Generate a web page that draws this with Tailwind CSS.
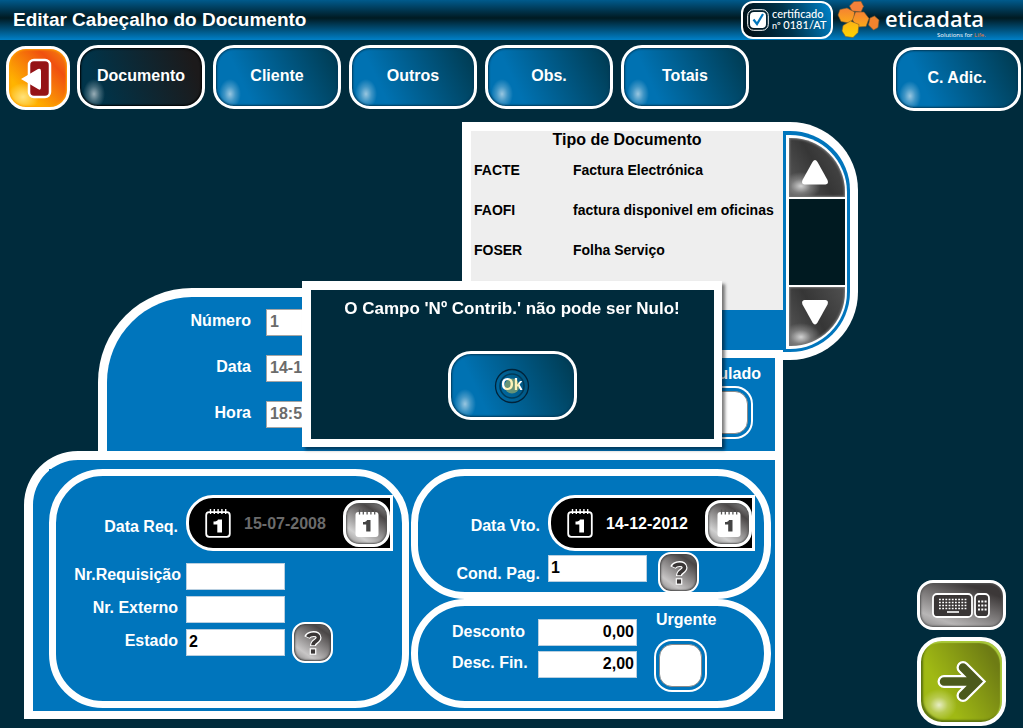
<!DOCTYPE html>
<html lang="pt">
<head>
<meta charset="utf-8">
<meta name="viewport" content="width=device-width, initial-scale=1">
<title>Editar Cabeçalho do Documento</title>
<script src="https://cdn.jsdelivr.net/npm/@tailwindcss/browser@4"></script>
</head>
<body class="min-h-screen flex flex-col bg-[#002b3c] font-['Liberation_Sans',Arial,sans-serif] font-bold text-base leading-5 text-white overflow-x-hidden">

<svg class="hidden" aria-hidden="true">
  <defs>
    <symbol id="calendar-outline" viewBox="0 0 26 30">
      <rect x="1.2" y="4.2" width="23.6" height="24.6" rx="3" fill="none" stroke="#fff" stroke-width="1.8"/>
      <path d="M5.5 1v5M9.3 1v5M13.1 1v5M16.9 1v5M20.7 1v5" stroke="#fff" stroke-width="1.4"/>
      <path d="M8.500 13.500c2.600 0 4-.5 4.500-2h4v13h-4.700v-8H8.500z" fill="#fff"/>
    </symbol>
    <symbol id="calendar-solid" viewBox="0 0 26 30">
      <rect x="1.500" y="4" width="23" height="25" rx="3" fill="#fff"/>
      <path d="M5.500 1.500v5M9.300 1.500v5M13.100 1.500v5M16.900 1.500v5M20.700 1.500v5" stroke="#555" stroke-width="1.300"/>
      <path d="M9 14c2.400 0 3.500-.5 4-2h3.500v11.500h-4.300v-7H9z" fill="#444"/>
    </symbol>
    <symbol id="question" viewBox="0 0 20 26">
      <g fill="none" stroke-linejoin="miter">
        <path d="M4 7.500C6 3 15.500 2.500 15.500 7.500c0 4-5.500 3.500-5.500 8.500" stroke="#fff" stroke-width="6"/>
        <path d="M4.700 7C6.500 3.500 15.500 3 15.500 7.500c0 4-5.500 3.500-5.500 7.700" stroke="#3a3636" stroke-width="3.600"/>
      </g>
      <rect x="7.300" y="18.800" width="5.400" height="5.400" fill="#3a3636" stroke="#fff" stroke-width="1.200"/>
    </symbol>
  </defs>
</svg>

<header class="h-10 flex items-center justify-between pl-[13px] pr-[37px] bg-[linear-gradient(#005a8c,#001a22_45%,#0080c8)]">
  <h1 class="text-[19px] leading-6">Editar Cabeçalho do Documento</h1>
  <div class="flex items-center gap-1">
    <div class="w-[92px] h-[38px] flex items-center gap-[3px] pl-1 rounded-xl border-2 border-white bg-[linear-gradient(70deg,#000a10,#00344c_50%,#0084cc)]">
      <svg class="w-[22px] h-[22px] shrink-0" viewBox="0 0 22 22">
        <rect x=".7" y=".7" width="20.600" height="20.600" rx="6" fill="none" stroke="#fff" stroke-width="1"/>
        <rect x="3" y="3" width="16" height="16" rx="4" fill="#fff"/>
        <path d="M6.500 10.500l3.500 4.500 6-10" fill="none" stroke="#0075bc" stroke-width="2.200"/>
      </svg>
      <div class="font-['Lato',sans-serif] font-medium">
        <div class="text-[11px] leading-[10px]">certificado</div>
        <div class="text-[11px] leading-[12px] whitespace-nowrap"><span class="text-[9px]">nº</span> 0181/AT</div>
      </div>
    </div>
    <svg class="w-[149px] h-10" viewBox="0 0 149 40" role="img" aria-label="eticadata">
      <defs>
        <linearGradient id="amber" x1="0" y1="0" x2="0" y2="1"><stop offset="0" stop-color="#f58233"/><stop offset="1" stop-color="#fba919"/></linearGradient>
        <linearGradient id="gold" x1="0" y1="0" x2="0" y2="1"><stop offset="0" stop-color="#fbb216"/><stop offset="1" stop-color="#ffd400"/></linearGradient>
      </defs>
      <g stroke="#7a5a30" stroke-width=".6" stroke-linejoin="round">
        <path d="M12.500 6L17 1.500l7-.2 2.500 5L24 12l-9-1z" fill="#f5813a"/>
        <path d="M3 9.500L10 8l7.500 4-.5 6.500-5 4.500-8-1.500L1 15z" fill="url(#amber)"/>
        <path d="M18.500 12l8.500 0 5 6.500-3 8-9 .5-4.500-7z" fill="url(#amber)"/>
        <path d="M6 25.500l7.500-4.500 8.500 3.500-1 8-5 5-7.500-1-3.500-5.500z" fill="url(#gold)"/>
        <path d="M33 18l4.500-2 4.500 4-1 7.500-4.500 2.500-5-5z" fill="#f0832d"/>
      </g>
      <text x="48" y="27" font-family="Open Sans" font-weight="600" font-size="22" fill="#fff">eticadata</text>
      <text x="100" y="37" font-family="Open Sans" font-weight="400" font-size="6" fill="#fff">Solutions for <tspan fill="#f47b30">Life.</tspan></text>
    </svg>
  </div>
</header>

<nav class="flex items-start gap-2 pt-[5px] pl-[6px] pr-[2px]" aria-label="Secções">
  <button type="button" aria-label="Sair" class="size-16 -mr-px mt-px shrink-0 rounded-[20px] border-3 border-white shadow-[inset_0_0_2px_1px_#ffa000] bg-[radial-gradient(ellipse_16px_14px_at_14px_48px,#ffe27a,transparent),linear-gradient(45deg,#ffb400_25%,#f0500f_75%,#f58a10)]">
    <svg class="w-full h-full" viewBox="0 0 58 58">
      <rect x="20" y="11" width="21" height="37" rx="5" fill="#951316" stroke="#fff" stroke-width="2.500"/>
      <path d="M12 30l17-10q3-1 3 2v16q0 4-3 2z" fill="#fff"/>
    </svg>
  </button>
  <button type="button" class="w-32 h-16 rounded-[21px] border-3 border-white pb-[2px] shadow-[inset_0_0_2px_1px_#000] bg-[radial-gradient(ellipse_11px_15px_at_14px_46px,rgba(255,255,255,0.6),rgba(255,255,255,0.25)_50%,transparent),linear-gradient(70deg,#00344a_15%,#1c1a1b_90%)]">Documento</button>
  <button type="button" class="w-32 h-16 rounded-[21px] border-3 border-white pb-[2px] shadow-[inset_0_0_2px_1px_#003a5a] bg-[radial-gradient(ellipse_11px_15px_at_14px_46px,rgba(255,255,255,0.6),rgba(255,255,255,0.25)_50%,transparent),linear-gradient(65deg,#0072b2_25%,#003d55_95%)]">Cliente</button>
  <button type="button" class="w-32 h-16 rounded-[21px] border-3 border-white pb-[2px] shadow-[inset_0_0_2px_1px_#003a5a] bg-[radial-gradient(ellipse_11px_15px_at_14px_46px,rgba(255,255,255,0.6),rgba(255,255,255,0.25)_50%,transparent),linear-gradient(65deg,#0072b2_25%,#003d55_95%)]">Outros</button>
  <button type="button" class="w-32 h-16 rounded-[21px] border-3 border-white pb-[2px] shadow-[inset_0_0_2px_1px_#003a5a] bg-[radial-gradient(ellipse_11px_15px_at_14px_46px,rgba(255,255,255,0.6),rgba(255,255,255,0.25)_50%,transparent),linear-gradient(65deg,#0072b2_25%,#003d55_95%)]">Obs.</button>
  <button type="button" class="w-32 h-16 rounded-[21px] border-3 border-white pb-[2px] shadow-[inset_0_0_2px_1px_#003a5a] bg-[radial-gradient(ellipse_11px_15px_at_14px_46px,rgba(255,255,255,0.6),rgba(255,255,255,0.25)_50%,transparent),linear-gradient(65deg,#0072b2_25%,#003d55_95%)]">Totais</button>
  <button type="button" class="w-32 h-16 mt-[2px] ml-auto rounded-[21px] border-3 border-white pb-[2px] shadow-[inset_0_0_2px_1px_#003a5a] bg-[radial-gradient(ellipse_11px_15px_at_14px_46px,rgba(255,255,255,0.6),rgba(255,255,255,0.25)_50%,transparent),linear-gradient(65deg,#0072b2_25%,#003d55_95%)]">C. Adic.</button>
</nav>

<main class="flex-1 flex justify-between pt-[11px] pl-6 pr-[17px]">
  <form class="w-full max-w-[834px] shrink-0 flex flex-col">
    <div class="grid">
      <!-- Document identification -->
      <section class="col-start-1 row-start-1 mt-[166px] ml-[74px] mr-[75px] flex justify-between rounded-tl-[94px] border-t-9 border-l-9 border-r-8 border-white bg-[#0075bc] pt-3 pb-[17px] pr-[14px]">
        <div class="grid grid-cols-[144px_99px] gap-x-[15px] gap-y-[19px] content-start">
          <label for="numero" class="text-right pt-[2px]">Número</label>
          <input id="numero" value="1" disabled class="h-[27px] w-full px-[3px] pb-[2px] bg-white border border-[#a5a5a5] text-[#6b6b6b]">
          <label for="data" class="text-right pt-[2px]">Data</label>
          <input id="data" value="14-12-2012" disabled class="h-[27px] w-full px-[3px] pb-[2px] bg-white border border-[#a5a5a5] text-[#6b6b6b]">
          <label for="hora" class="text-right pt-[2px]">Hora</label>
          <input id="hora" value="18:52:00" disabled class="h-[27px] w-full px-[3px] pb-[2px] bg-white border border-[#a5a5a5] text-[#6b6b6b]">
        </div>
        <div class="flex flex-col items-start pt-[55px]">
          <label for="anulado">Anulado</label>
          <input id="anulado" type="checkbox" class="appearance-none size-[43px] mt-[7px] ml-2 rounded-[13px] bg-white border border-[#8a8a8a] shadow-[0_0_0_3px_#0075bc,0_0_0_5px_#fff]">
        </div>
      </section>

      <!-- Document type picker -->
      <section class="col-start-1 row-start-1 self-start justify-self-end z-10 flex items-start">
        <div class="w-[321px] border-t-9 border-l-9 border-b-8 border-white bg-[#0075bc] pb-10 text-black">
          <div class="bg-[#eeeeee] h-[179px]">
            <table class="w-full text-[14px] leading-4 text-left">
              <caption class="text-base leading-[18px]">Tipo de Documento</caption>
              <tbody>
                <tr class="h-10"><th scope="row" class="w-[102px] pl-[3px] pt-[2px]">FACTE</th><td class="pt-[2px]">Factura Electrónica</td></tr>
                <tr class="h-10"><th scope="row" class="w-[102px] pl-[3px] pt-[2px]">FAOFI</th><td class="pt-[2px] whitespace-nowrap">factura disponivel em oficinas</td></tr>
                <tr class="h-10"><th scope="row" class="w-[102px] pl-[3px] pt-[2px]">FOSER</th><td class="pt-[2px]">Folha Serviço</td></tr>
              </tbody>
            </table>
          </div>
        </div>
        <div class="w-[75px] rounded-r-[68px] border-t-9 border-r-8 border-b-8 border-white bg-[#0075bc] pt-1 pl-[3px] pr-[3px] pb-[3px]">
          <div class="rounded-r-[57px] bg-white p-[3px] pr-[2px] flex flex-col gap-[2px]">
            <button type="button" aria-label="Subir" class="h-[59px] rounded-tr-[54px] shadow-[inset_0_0_2px_1px_#777] bg-[radial-gradient(ellipse_20px_14px_at_12px_48px,rgba(255,255,255,0.75),rgba(255,255,255,0.25)_50%,transparent),linear-gradient(60deg,#5a5a5a,#363636_50%,#505050)]">
              <svg class="w-full h-full" viewBox="0 0 56 59"><path d="M23.500 24q2.500-4 5 0l10 18q1.500 4-2 4.500h-21q-3.500-.5-2-4.500z" fill="#fff"/></svg>
            </button>
            <div class="h-[86px] bg-[#001a21]"></div>
            <button type="button" aria-label="Descer" class="h-[59px] rounded-br-[54px] shadow-[inset_0_0_2px_1px_#777] bg-[radial-gradient(ellipse_20px_14px_at_12px_50px,rgba(255,255,255,0.75),rgba(255,255,255,0.25)_50%,transparent),linear-gradient(60deg,#5a5a5a,#363636_50%,#505050)]">
              <svg class="w-full h-full" viewBox="0 0 56 59"><path d="M23.500 35.500q2.500 4 5 0l10-18q1.500-4-2-4.500h-21q-3.500.5-2 4.500z" fill="#fff"/></svg>
            </button>
          </div>
        </div>
      </section>
    </div>

    <!-- Request, payment and discount data -->
    <section class="mr-[75px] rounded-tl-[54px] border-t-9 border-l-9 border-r-8 border-b-8 border-white bg-[#0075bc] pt-[9px] pl-4 pr-1 pb-[3px]">
      <div class="grid grid-cols-2 gap-x-[2px] bg-[#0075bc]">
        <div class="rounded-[54px] border-7 border-white pt-[19px] grid grid-cols-[122px_1fr] content-start items-center gap-x-2">
          <label for="datareq" class="text-right whitespace-nowrap pb-1">Data Req.</label>
          <div class="w-[207px] h-14 mb-3 flex items-center rounded-l-[27px] border-3 border-white bg-black pl-4">
            <svg class="w-[26px] h-[30px] shrink-0"><use href="#calendar-outline"/></svg>
            <input id="datareq" value="15-07-2008" disabled class="ml-[13px] w-[90px] pt-[2px] text-[#6b6b6b]">
            <button type="button" aria-label="Escolher Data Req." class="ml-auto size-[47px] shrink-0 flex items-center justify-center rounded-2xl border-3 border-white shadow-[inset_0_0_2px_1px_#555] bg-[linear-gradient(35deg,#8c8a8a,#d0d0d0_25%,#4a4646_75%,#999)]"><svg class="w-[26px] h-[30px]"><use href="#calendar-solid"/></svg></button>
          </div>
          <label for="nrreq" class="justify-self-end whitespace-nowrap pb-[9px] -mr-[3px]">Nr.Requisição</label>
          <input id="nrreq" class="w-[99px] h-[27px] mb-[6px] px-[3px] bg-white border border-[#b9cfe0] text-black">
          <label for="nrext" class="text-right whitespace-nowrap pb-[9px]">Nr. Externo</label>
          <input id="nrext" class="w-[99px] h-[27px] mb-[6px] px-[3px] bg-white border border-[#b9cfe0] text-black">
          <label for="estado" class="text-right whitespace-nowrap pb-[3px]">Estado</label>
          <div class="flex items-center gap-[7px] h-[27px]">
            <input id="estado" value="2" class="w-[99px] h-[27px] px-[2px] pb-[2px] bg-white border border-[#b9cfe0] text-black">
            <button type="button" aria-label="Procurar Estado" class="size-[41px] shrink-0 flex items-center justify-center rounded-[13px] border-2 border-white shadow-[inset_0_0_2px_1px_#444] bg-[linear-gradient(35deg,#858383,#c8c6c6_25%,#4a4646_80%,#777)]"><svg class="w-5 h-[26px]"><use href="#question"/></svg></button>
          </div>
        </div>

        <div class="flex flex-col">
          <div class="h-[130px] rounded-[54px] border-7 border-white pt-[19px] grid grid-cols-[122px_1fr] grid-rows-[60px_27px] content-start items-start gap-x-2">
            <label for="datavto" class="text-right whitespace-nowrap pt-[21px]">Data Vto.</label>
            <div class="w-[207px] h-14 flex items-center rounded-l-[27px] border-3 border-white bg-black pl-4">
              <svg class="w-[26px] h-[30px] shrink-0"><use href="#calendar-outline"/></svg>
              <input id="datavto" value="14-12-2012" class="ml-[13px] w-[90px] pt-[2px] text-white">
              <button type="button" aria-label="Escolher Data Vto." class="ml-auto size-[47px] shrink-0 flex items-center justify-center rounded-2xl border-3 border-white shadow-[inset_0_0_2px_1px_#555] bg-[linear-gradient(35deg,#8c8a8a,#d0d0d0_25%,#4a4646_75%,#999)]"><svg class="w-[26px] h-[30px]"><use href="#calendar-solid"/></svg></button>
            </div>
            <label for="condpag" class="text-right whitespace-nowrap pt-[9px]">Cond. Pag.</label>
            <div class="flex items-start gap-[11px] h-[27px]">
              <input id="condpag" value="1" class="w-[99px] h-[27px] px-[2px] pb-[2px] bg-white border border-[#b9cfe0] text-black">
              <button type="button" aria-label="Procurar Cond. Pag." class="size-[41px] -mt-[3px] shrink-0 flex items-center justify-center rounded-[13px] border-2 border-white shadow-[inset_0_0_2px_1px_#444] bg-[linear-gradient(35deg,#858383,#c8c6c6_25%,#4a4646_80%,#777)]"><svg class="w-5 h-[26px]"><use href="#question"/></svg></button>
            </div>
          </div>

          <div class="h-[109px] rounded-[54px] border-7 border-white pl-[34px] flex items-start">
            <div class="grid grid-cols-[86px_99px] items-center gap-y-[5px] pt-[13px]">
              <label for="desconto" class="pb-[2px]">Desconto</label>
              <input id="desconto" value="0,00" class="w-full h-[27px] px-[2px] pb-[2px] bg-white border border-[#b9cfe0] text-black text-right">
              <label for="descfin" class="pb-1">Desc. Fin.</label>
              <input id="descfin" value="2,00" class="w-full h-[27px] px-[2px] pb-[2px] bg-white border border-[#b9cfe0] text-black text-right">
            </div>
            <div class="ml-[17px] pt-1 flex flex-col items-start">
              <label for="urgente" class="pl-[2px]">Urgente</label>
              <input id="urgente" type="checkbox" class="appearance-none size-[43px] mt-[14px] ml-[5px] rounded-[13px] bg-white border border-[#8a8a8a] shadow-[0_0_0_3px_#0075bc,0_0_0_5px_#fff]">
            </div>
          </div>
        </div>
      </div>
    </section>
  </form>

  <aside class="flex flex-col justify-end gap-[7px] pb-[2px]">
    <button type="button" aria-label="Teclado" class="w-[89px] h-[50px] rounded-2xl border-3 border-white shadow-[inset_0_0_2px_1px_#555] bg-[linear-gradient(20deg,#8a8888,#b8b6b6_20%,#3c3838_80%)]">
      <svg class="w-full h-full" viewBox="0 0 83 44">
        <rect x="13" y="11" width="39" height="23" rx="4" fill="#3a3636" stroke="#fff" stroke-width="1.800"/>
        <rect x="55" y="11" width="14" height="23" rx="4" fill="#3a3636" stroke="#fff" stroke-width="1.800"/>
        <path d="M19 16.500h28M19 19.500h28M19 22.500h28M19 25.500h28" stroke="#fff" stroke-width="1.700" stroke-dasharray="1.800 1.400"/>
        <path d="M27 29h12" stroke="#fff" stroke-width="1.600"/>
        <path d="M58 18.500h9M58 22.500h9M58 26.500h9" stroke="#fff" stroke-width="1.900" stroke-dasharray="2 1.300"/>
      </svg>
    </button>
    <button type="button" aria-label="Avançar" class="size-[89px] rounded-[25px] border-4 border-white shadow-[inset_-2px_2px_1px_0_#a9c93a,inset_2px_-2px_2px_0_#5d7410] bg-[radial-gradient(ellipse_18px_16px_at_18px_64px,rgba(255,255,255,0.75),rgba(255,255,255,0.25)_50%,transparent),linear-gradient(60deg,#a0b914_30%,#6e7c14_85%)]">
      <svg class="w-full h-full" viewBox="0 0 81 81" fill="none" stroke-linecap="round" stroke-linejoin="miter">
        <path d="M23 40.500h32M42 26.500l14 14-14 14" stroke="#fff" stroke-width="13"/>
        <path d="M23 40.500h32M42 26.500l14 14-14 14" stroke="#4c5a1c" stroke-width="8.500"/>
      </svg>
    </button>
  </aside>
</main>

<dialog open aria-labelledby="mensagem" class="fixed inset-0 m-auto z-20 w-[420px] h-[166px] flex flex-col items-center border-9 border-r-8 border-b-8 border-white bg-[#002b3c] text-white shadow-[3px_3px_3px_rgba(0,0,0,0.5)]">
  <p id="mensagem" class="pt-[9px] text-[17px] leading-5">O Campo 'Nº Contrib.' não pode ser Nulo!</p>
  <button type="button" class="relative w-[129px] h-[69px] mt-8 rounded-[23px] border-3 border-white pb-[2px] shadow-[inset_0_0_2px_1px_#003a5a] bg-[radial-gradient(ellipse_11px_15px_at_14px_50px,rgba(255,255,255,0.6),rgba(255,255,255,0.25)_50%,transparent),linear-gradient(65deg,#0072b2_25%,#003d55_95%)]">Ok
    <svg class="absolute inset-0 m-auto size-9" viewBox="0 0 36 36" fill="none" aria-hidden="true">
      <circle cx="18" cy="18" r="16.500" stroke="#00233a" stroke-width="1.300"/>
      <circle cx="18" cy="18" r="12" stroke="#003a58" stroke-width="1.600"/>
      <circle cx="18" cy="18" r="7.500" fill="#ffe14d" fill-opacity=".4"/>
    </svg>
  </button>
</dialog>
</body>
</html>
